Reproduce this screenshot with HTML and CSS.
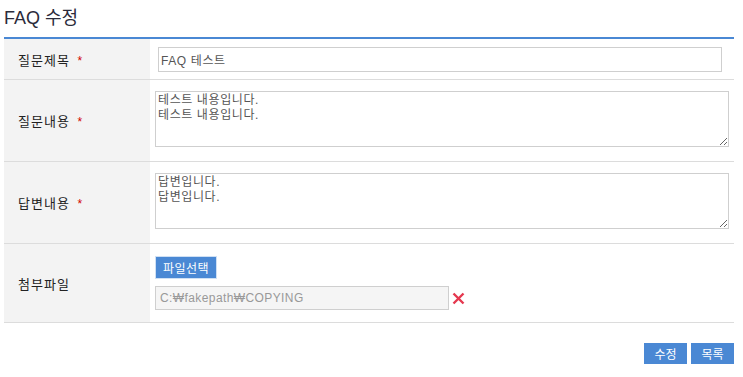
FILE: index.html
```html
<!DOCTYPE html>
<html lang="ko">
<head>
    <meta charset="UTF-8">
    <title>FAQ 수정</title>
    <link rel="stylesheet" href="styles.css">
</head>
<body>
    <div class="wrap">
        <h2 class="title">FAQ 수정</h2>
        <table class="form-table">
            <tr class="row-title">
                <th>질문제목 <span class="req">*</span></th>
                <td><input type="text" class="txt" value="FAQ 테스트"></td>
            </tr>
            <tr class="row-area">
                <th>질문내용 <span class="req">*</span></th>
                <td><textarea class="area">테스트 내용입니다.
테스트 내용입니다.</textarea></td>
            </tr>
            <tr class="row-area">
                <th>답변내용 <span class="req">*</span></th>
                <td><textarea class="area">답변입니다.
답변입니다.</textarea></td>
            </tr>
            <tr class="row-file">
                <th>첨부파일</th>
                <td>
                    <button type="button" class="btn btn-file">파일선택</button>
                    <div class="file-line">
                        <input type="text" class="file-path" value="C:₩fakepath₩COPYING" readonly>
                        <svg class="del" width="13" height="13" viewBox="0 0 13 13">
                            <path d="M1.5 1.5 L11.5 11.5 M11.5 1.5 L1.5 11.5" stroke="#e5384f" stroke-width="2.4" fill="none"/>
                        </svg>
                    </div>
                </td>
            </tr>
        </table>
        <div class="btns">
            <button type="button" class="btn">수정</button>
            <button type="button" class="btn">목록</button>
        </div>
    </div>
</body>
</html>
```

FILE: styles.css
```css
body {
    margin: 0;
    font-family: "Liberation Sans", "Noto Sans CJK KR", sans-serif;
    color: #333;
    background: #fff;
}

.wrap {
    width: 730px;
    padding: 0 0 0 4px;
}

.title {
    margin: 0;
    height: 37px;
    font-size: 18px;
    font-weight: normal;
    line-height: 36px;
    color: #2b2b3a;
}

.form-table {
    width: 100%;
    border-collapse: collapse;
    border-top: 2px solid #4a88d4;
}

.form-table tr {
    border-bottom: 1px solid #dcdcdc;
}

.form-table th {
    width: 132px;
    padding: 0 0 0 14px;
    background-color: #f3f3f3;
    font-size: 13px;
    font-weight: normal;
    text-align: left;
    color: #222;
    letter-spacing: 1px;
}

.req {
    margin-left: 3px;
    color: #d20000;
    font-size: 12px;
}

.form-table td {
    padding: 0 0 0 5px;
    font-size: 12px;
}

.row-title td {
    height: 40px;
    padding-left: 8px;
}

.txt {
    display: block;
    box-sizing: border-box;
    width: 564px;
    height: 25px;
    margin: 0;
    padding: 0 2px;
    border: 1px solid #cfcfcf;
    font-family: inherit;
    font-size: 12px;
    letter-spacing: 0.6px;
    color: #555;
    outline: none;
}

.row-area td {
    height: 81px;
}

.area {
    display: block;
    box-sizing: border-box;
    width: 574px;
    height: 56px;
    margin: -3px 0 0;
    padding: 1px 2px;
    border: 1px solid #cfcfcf;
    font-family: inherit;
    font-size: 12px;
    line-height: 15px;
    letter-spacing: 0.6px;
    color: #555;
}

.row-file td {
    height: 78px;
}

.btn {
    box-sizing: border-box;
    height: 21px;
    padding: 0 9px;
    border: 1px solid #4a88d4;
    background-color: #4a88d4;
    font-family: inherit;
    font-size: 12px;
    color: #fff;
    cursor: pointer;
}

.btn-file {
    display: block;
    width: 62px;
    height: 23px;
    padding: 0;
    border-color: #cfe0f4;
    font-size: 12px;
    letter-spacing: 0.5px;
}

.file-line {
    display: flex;
    align-items: center;
    gap: 3px;
    margin-top: 7px;
}

.file-path {
    box-sizing: border-box;
    width: 294px;
    height: 24px;
    margin: 0;
    padding: 0 4px;
    border: 1px solid #cfcfcf;
    background-color: #f5f5f5;
    font-family: inherit;
    font-size: 12px;
    letter-spacing: 0.4px;
    color: #999;
    outline: none;
}

.btns {
    display: flex;
    justify-content: flex-end;
    gap: 4px;
    margin-top: 20px;
}

.btns .btn {
    width: 43px;
    padding: 0;
}
```
